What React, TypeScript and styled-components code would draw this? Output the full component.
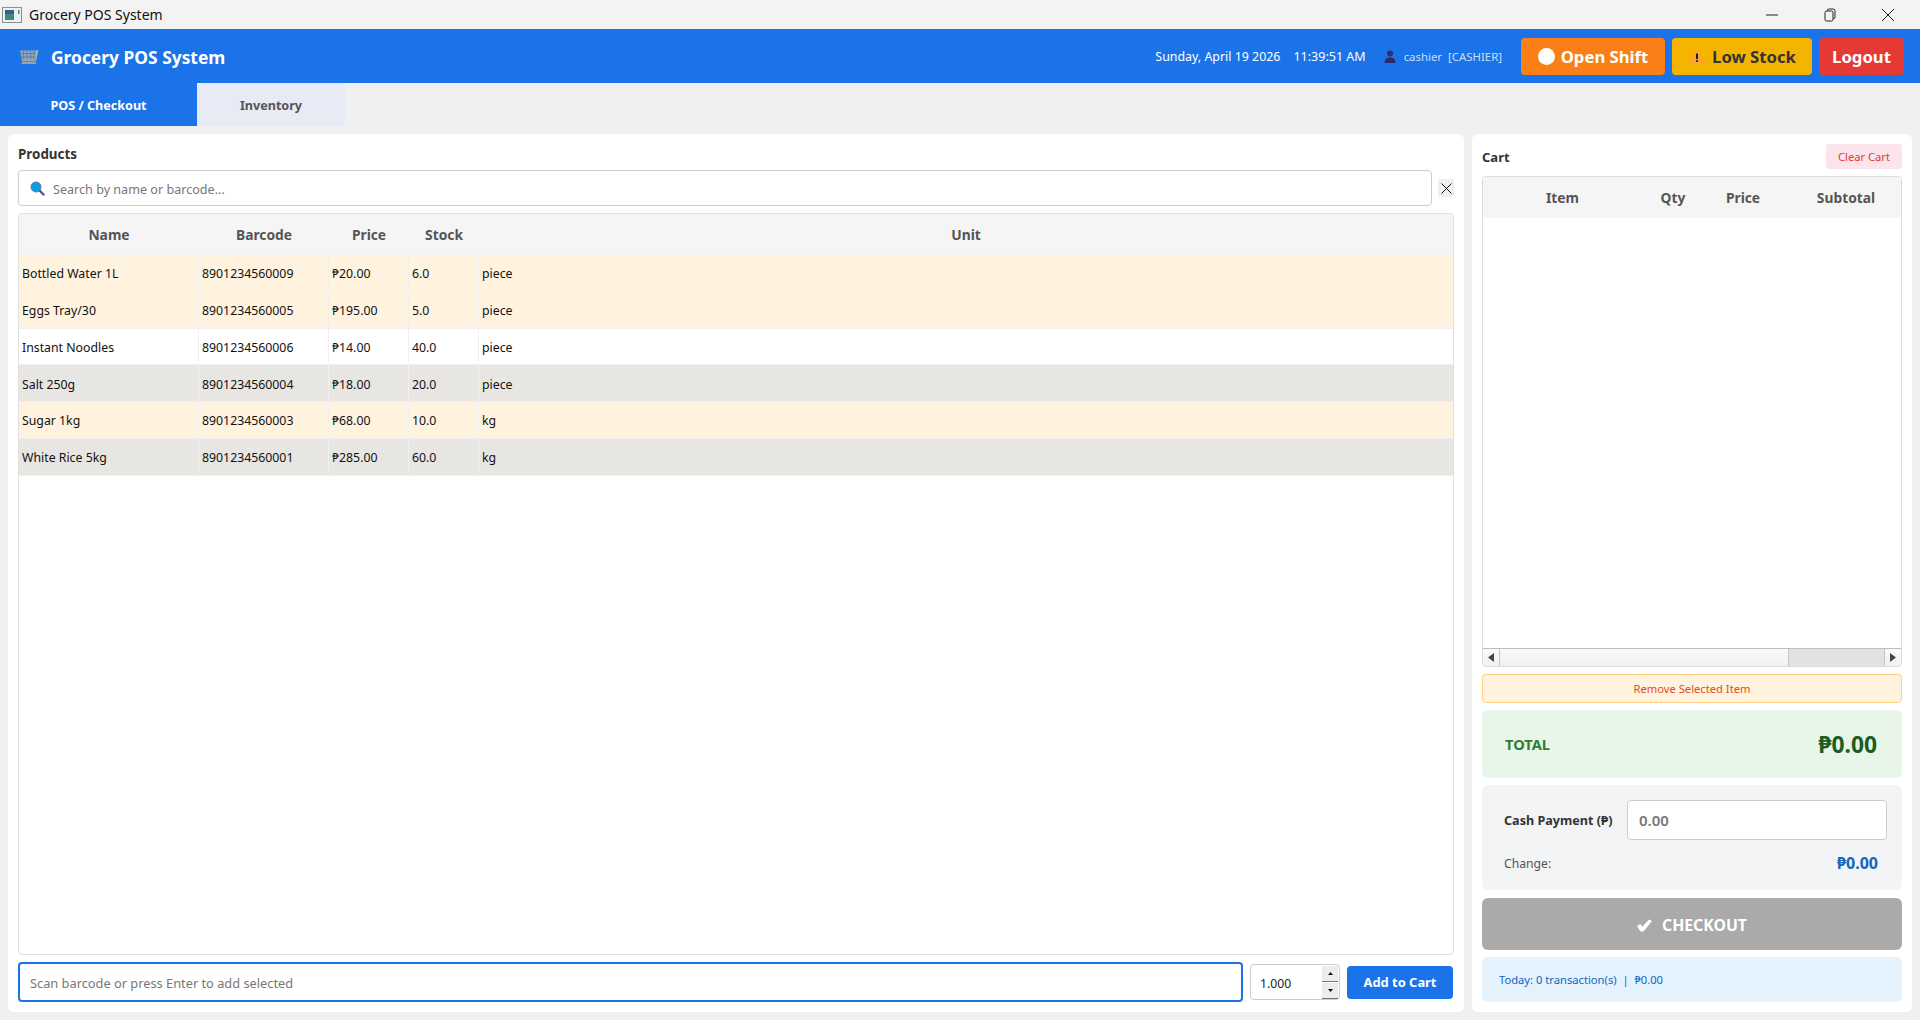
import styled, { createGlobalStyle } from "styled-components";

type Product = {
  name: string;
  barcode: string;
  price: string;
  stock: string;
  unit: string;
  tone: "low" | "plain" | "alt";
};

const products: Product[] = [
  { name: "Bottled Water 1L", barcode: "8901234560009", price: "₱20.00", stock: "6.0", unit: "piece", tone: "low" },
  { name: "Eggs Tray/30", barcode: "8901234560005", price: "₱195.00", stock: "5.0", unit: "piece", tone: "low" },
  { name: "Instant Noodles", barcode: "8901234560006", price: "₱14.00", stock: "40.0", unit: "piece", tone: "plain" },
  { name: "Salt 250g", barcode: "8901234560004", price: "₱18.00", stock: "20.0", unit: "piece", tone: "alt" },
  { name: "Sugar 1kg", barcode: "8901234560003", price: "₱68.00", stock: "10.0", unit: "kg", tone: "low" },
  { name: "White Rice 5kg", barcode: "8901234560001", price: "₱285.00", stock: "60.0", unit: "kg", tone: "alt" },
];

const rowColors = { low: "#fff3e0", plain: "#ffffff", alt: "#e8e6e3" };

const App = (): JSX.Element => {
  return (
    <Page>
      <GlobalStyle />
      <TitleBar>
        <TitleLeft>
          <WindowIcon />
          <span>Grocery POS System</span>
        </TitleLeft>
        <WindowControls>
          <WindowButton>
            <svg width="12" height="12" viewBox="0 0 12 12">
              <path d="M0 6h12" stroke="#222" strokeWidth="1" />
            </svg>
          </WindowButton>
          <WindowButton>
            <svg width="12" height="14" viewBox="0 0 12 14">
              <rect x="1" y="3" width="8" height="10" rx="1.5" fill="none" stroke="#222" />
              <path d="M3.5 3V2.2A1.2 1.2 0 0 1 4.7 1h4.6A1.7 1.7 0 0 1 11 2.7v6.6A1.2 1.2 0 0 1 9.8 10.5H9" fill="none" stroke="#222" />
            </svg>
          </WindowButton>
          <WindowButton>
            <svg width="14" height="14" viewBox="0 0 14 14">
              <path d="M1 1l12 12M13 1L1 13" stroke="#222" strokeWidth="1" />
            </svg>
          </WindowButton>
        </WindowControls>
      </TitleBar>

      <Header>
        <Brand>
          <CartLogo />
          <span>Grocery POS System</span>
        </Brand>
        <HeaderRight>
          <DateText>Sunday, April 19 2026</DateText>
          <TimeText>11:39:51 AM</TimeText>
          <UserInfo>
            <UserIcon />
            <span>cashier</span>
            <span>[CASHIER]</span>
          </UserInfo>
          <HeaderButtons>
            <HeaderButton $bg="#f97f16" $width={144}>
              <Dot />
              Open Shift
            </HeaderButton>
            <HeaderButton $bg="#f5b400" $color="#333" $width={140}>
              <WarnIcon />
              Low Stock
            </HeaderButton>
            <HeaderButton $bg="#e53935" $width={85}>
              Logout
            </HeaderButton>
          </HeaderButtons>
        </HeaderRight>
      </Header>

      <Tabs>
        <Tab $active $width={197}>POS / Checkout</Tab>
        <Tab $width={148}>Inventory</Tab>
      </Tabs>

      <Main>
        <ProductsPanel>
          <PanelTitle>Products</PanelTitle>
          <SearchRow>
            <SearchBox>
              <SearchIcon />
              <SearchInput placeholder="Search by name or barcode..." />
            </SearchBox>
            <ClearSearch>
              <svg width="11" height="11" viewBox="0 0 11 11">
                <path d="M.5.5l10 10M10.5.5l-10 10" stroke="#111" strokeWidth="1" />
              </svg>
            </ClearSearch>
          </SearchRow>
          <ProductTable>
            <ProductHead>
              <span>Name</span>
              <span>Barcode</span>
              <span>Price</span>
              <span>Stock</span>
              <span>Unit</span>
            </ProductHead>
            {products.map((product) => (
              <ProductRow key={product.barcode} $tone={product.tone}>
                <ProductCell>{product.name}</ProductCell>
                <ProductCell>{product.barcode}</ProductCell>
                <ProductCell>{product.price}</ProductCell>
                <ProductCell>{product.stock}</ProductCell>
                <ProductCell>{product.unit}</ProductCell>
              </ProductRow>
            ))}
          </ProductTable>
          <ScanRow>
            <ScanInput placeholder="Scan barcode or press Enter to add selected" />
            <QtyBox>
              <QtyValue defaultValue="1.000" />
              <SpinColumn>
                <SpinButton>
                  <svg width="5" height="3" viewBox="0 0 5 3"><path d="M2.5 0L5 3H0z" fill="#111" /></svg>
                </SpinButton>
                <SpinButton>
                  <svg width="5" height="3" viewBox="0 0 5 3"><path d="M0 0h5L2.5 3z" fill="#111" /></svg>
                </SpinButton>
              </SpinColumn>
            </QtyBox>
            <AddButton>Add to Cart</AddButton>
          </ScanRow>
        </ProductsPanel>

        <CartPanel>
          <CartHeader>
            <CartTitle>Cart</CartTitle>
            <ClearCart>Clear Cart</ClearCart>
          </CartHeader>
          <CartTable>
            <CartHead>
              <span>Item</span>
              <span>Qty</span>
              <span>Price</span>
              <span>Subtotal</span>
            </CartHead>
            <CartBody />
            <ScrollBar>
              <ScrollArrow>
                <svg width="6" height="9" viewBox="0 0 6 9"><path d="M6 0v9L0 4.5z" fill="#444" /></svg>
              </ScrollArrow>
              <ScrollTrack />
              <ScrollThumb />
              <ScrollArrow>
                <svg width="6" height="9" viewBox="0 0 6 9"><path d="M0 0v9l6-4.500z" fill="#444" /></svg>
              </ScrollArrow>
            </ScrollBar>
          </CartTable>
          <RemoveButton>Remove Selected Item</RemoveButton>
          <TotalBox>
            <TotalLabel>TOTAL</TotalLabel>
            <TotalValue>₱0.00</TotalValue>
          </TotalBox>
          <PaymentBox>
            <CashRow>
              <CashLabel>Cash Payment (₱)</CashLabel>
              <CashInput placeholder="0.00" />
            </CashRow>
            <ChangeRow>
              <ChangeLabel>Change:</ChangeLabel>
              <ChangeValue>₱0.00</ChangeValue>
            </ChangeRow>
          </PaymentBox>
          <CheckoutButton>
            <svg width="15" height="13" viewBox="0 0 15 13">
              <path d="M0 7l3.500-2 1.800 2.800L12 0.500 15 2 6.500 12.500H3.500z" fill="#ffffff" />
            </svg>
            CHECKOUT
          </CheckoutButton>
          <TodayBox>Today: 0 transaction(s)&nbsp; |&nbsp; ₱0.00</TodayBox>
        </CartPanel>
      </Main>
    </Page>
  );
};

export default App;

const WindowIcon = () => (
  <svg width="20" height="16" viewBox="0 0 20 16">
    <rect x="0.5" y="0.5" width="19" height="15" fill="#eef1f1" stroke="#8a8f92" />
    <rect x="3" y="3" width="9" height="10" fill="#3f8a7c" />
    <rect x="3" y="3" width="9" height="4" fill="#35607f" />
    <rect x="16" y="3" width="1.5" height="4" fill="#4a8a78" />
  </svg>
);

const CartLogo = () => (
  <svg width="20" height="16" viewBox="0 0 20 16">
    <path d="M1 1.500h15.500l3-1L17 12H3z" fill="#9aa3ad" />
    <path d="M4.500 2v8M8 2v8M11.500 2v8M15 2v8M1.500 4.500h15M2 8h14.500" stroke="#4f7fc0" strokeWidth="0.9" />
    <path d="M2.500 12.500h14l1 2.500H3z" fill="#8fa8a8" />
    <path d="M17.500 4l1.500-3-2 11z" fill="#b9c4c4" />
  </svg>
);

const UserIcon = () => (
  <svg width="12" height="13" viewBox="0 0 12 13">
    <circle cx="6" cy="3.500" r="3" fill="#3b2a6b" />
    <path d="M0.500 13c0-3.500 2-5.500 5.500-5.500s5.500 2 5.500 5.500z" fill="#2e2a66" />
  </svg>
);

const WarnIcon = () => (
  <svg width="18" height="16" viewBox="0 0 18 16">
    <path d="M9 1l8 14H1z" fill="#ffa52e" />
    <path d="M9 5.500v5.500" stroke="#111" strokeWidth="1.800" />
    <circle cx="9" cy="13" r="1" fill="#111" />
  </svg>
);

const SearchIcon = () => (
  <svg width="15" height="15" viewBox="0 0 15 15">
    <path d="M9.500 9.500l4 4" stroke="#5b4a96" strokeWidth="2.400" strokeLinecap="round" />
    <circle cx="6" cy="6" r="5" fill="#0a9fdc" stroke="#4c7fa8" strokeWidth="1" />
  </svg>
);

const GlobalStyle = createGlobalStyle`
  html, body {
    margin: 0;
    padding: 0;
    background: #f0f0f0;
  }

  * {
    box-sizing: border-box;
  }

  body, input, button {
    font-family: "Noto Sans", "Open Sans", "DejaVu Sans", sans-serif;
  }
`;

const Page = styled.div`
  display: flex;
  flex-direction: column;
  width: 1920px;
  height: 1020px;
  background: #f0f0f0;
  overflow: hidden;
`;

const TitleBar = styled.div`
  display: flex;
  align-items: center;
  justify-content: space-between;
  height: 29px;
  padding-left: 2px;
  background: #f3f3f3;
  color: #111;
  font-size: 14px;
`;

const TitleLeft = styled.div`
  display: flex;
  align-items: center;
  gap: 7px;
`;

const WindowControls = styled.div`
  display: flex;
  padding-right: 3px;
`;

const WindowButton = styled.div`
  display: flex;
  align-items: center;
  justify-content: center;
  width: 58px;
  height: 29px;
`;

const Header = styled.header`
  display: flex;
  align-items: center;
  justify-content: space-between;
  height: 54px;
  padding: 0 16px 0 19px;
  background: #1a73e8;
`;

const Brand = styled.div`
  display: flex;
  align-items: center;
  gap: 12px;
  padding-top: 1px;
  color: #ffffff;
  font-size: 17.4px;
  font-weight: 700;
`;

const HeaderRight = styled.div`
  display: flex;
  align-items: center;
`;

const DateText = styled.span`
  margin-right: 13px;
  padding-top: 1px;
  color: #ffffff;
  font-size: 12.4px;
`;

const TimeText = styled.span`
  margin-right: 18px;
  padding-top: 1px;
  color: #ffffff;
  font-size: 12.5px;
`;

const UserInfo = styled.div`
  display: flex;
  align-items: center;
  gap: 6px;
  margin-right: 19px;
  color: #c9defa;
  font-size: 11.4px;

  svg {
    margin-right: 2px;
  }
`;

const HeaderButtons = styled.div`
  display: flex;
  gap: 7px;
`;

const HeaderButton = styled.button<{ $bg: string; $color?: string; $width: number }>`
  display: flex;
  align-items: center;
  justify-content: center;
  gap: 6px;
  width: ${(props) => props.$width}px;
  height: 37px;
  padding: 0;
  border: none;
  border-radius: 4px;
  background: ${(props) => props.$bg};
  color: ${(props) => props.$color || "#ffffff"};
  font-size: 16.7px;
  font-weight: 700;
`;

const Dot = styled.span`
  width: 17px;
  height: 17px;
  border-radius: 50%;
  background: #ffffff;
`;

const Tabs = styled.nav`
  display: flex;
  height: 43px;
`;

const Tab = styled.div<{ $active?: boolean; $width: number }>`
  display: flex;
  align-items: center;
  justify-content: center;
  width: ${(props) => props.$width}px;
  padding-top: 2px;
  background: ${(props) => (props.$active ? "#1a73e8" : "#e8eaf6")};
  color: ${(props) => (props.$active ? "#ffffff" : "#555555")};
  font-size: 12.6px;
  font-weight: 700;
`;

const Main = styled.main`
  display: flex;
  flex: 1;
  gap: 8px;
  padding: 8px 8px 8px;
  min-height: 0;
`;

const Panel = styled.section`
  display: flex;
  flex-direction: column;
  border-radius: 6px;
  background: #ffffff;
`;

const ProductsPanel = styled(Panel)`
  width: 1456px;
  padding: 11px 10px 10px;
`;

const PanelTitle = styled.div`
  height: 25px;
  color: #333;
  font-size: 13.4px;
  font-weight: 700;
  line-height: 19px;
`;

const SearchRow = styled.div`
  display: flex;
  align-items: center;
  gap: 6px;
  height: 36px;
`;

const SearchBox = styled.div`
  display: flex;
  align-items: center;
  gap: 8px;
  flex: 1;
  height: 36px;
  padding: 0 10px 0 11px;
  border: 1px solid #ccc;
  border-radius: 4px;
`;

const SearchInput = styled.input`
  flex: 1;
  padding: 2px 0 0;
  border: none;
  outline: none;
  font-size: 12.6px;
  color: #333;

  &::placeholder {
    color: #777;
  }
`;

const ClearSearch = styled.button`
  display: flex;
  align-items: center;
  justify-content: center;
  width: 16px;
  height: 18px;
  padding: 0;
  border: none;
  border-radius: 2px;
  background: #f0f0f0;
`;

const ProductTable = styled.div`
  flex: 1;
  margin-top: 7px;
  border: 1px solid #e0e0e0;
  border-radius: 4px;
  overflow: hidden;
`;

const productColumns = "180px 130px 80px 70px 1fr";

const ProductHead = styled.div`
  display: grid;
  grid-template-columns: ${productColumns};
  align-items: center;
  height: 41px;
  background: #f5f5f5;
  color: #555;
  font-size: 13.8px;
  font-weight: 700;
  text-align: center;
`;

const ProductRow = styled.div<{ $tone: Product["tone"] }>`
  display: grid;
  grid-template-columns: ${productColumns};
  height: 36.8px;
  border-bottom: 1px solid #f0f0f0;
  background: ${(props) => rowColors[props.$tone]};
  color: #111;
  font-size: 12.3px;
`;

const ProductCell = styled.div`
  display: flex;
  align-items: center;
  padding: 1.5px 0 0 3px;
  border-right: 1px solid #f0f0f0;

  &:last-child {
    border-right: none;
  }
`;

const ScanRow = styled.div`
  display: flex;
  align-items: center;
  gap: 7px;
  height: 40px;
  margin-top: 7px;
`;

const ScanInput = styled.input`
  width: 1225px;
  height: 40px;
  padding: 2px 10px 0;
  border: 2px solid #1a73e8;
  border-radius: 4px;
  outline: none;
  font-size: 12.8px;

  &::placeholder {
    color: #777;
  }
`;

const QtyBox = styled.div`
  display: flex;
  align-items: center;
  width: 90px;
  height: 36px;
  padding: 0 1px 0 9px;
  border: 1px solid #ccc;
  border-radius: 4px;
`;

const QtyValue = styled.input`
  flex: 1;
  width: 60px;
  border: none;
  outline: none;
  padding: 2px 0 0;
  color: #222;
  font-size: 12.2px;
`;

const SpinColumn = styled.div`
  display: flex;
  flex-direction: column;
  gap: 1px;
`;

const SpinButton = styled.div`
  display: flex;
  align-items: center;
  justify-content: center;
  width: 16px;
  height: 16px;
  border-bottom: 1px solid #777;
  background: #ececec;
`;

const AddButton = styled.button`
  width: 106px;
  height: 33px;
  border: none;
  border-radius: 4px;
  background: #1a73e8;
  color: #ffffff;
  font-size: 12.9px;
  font-weight: 700;
`;

const CartPanel = styled(Panel)`
  width: 440px;
  padding: 10px;
`;

const CartHeader = styled.div`
  display: flex;
  align-items: center;
  justify-content: space-between;
  height: 24px;
`;

const CartTitle = styled.div`
  padding-top: 2px;
  color: #333;
  font-size: 13px;
  font-weight: 700;
`;

const ClearCart = styled.button`
  width: 76px;
  height: 25px;
  padding: 0;
  border: none;
  border-radius: 3px;
  background: #fce4ec;
  color: #e53935;
  font-size: 11.2px;
`;

const CartTable = styled.div`
  display: flex;
  flex-direction: column;
  height: 491px;
  margin-top: 8px;
  border: 1px solid #dcdcdc;
  border-radius: 4px;
  overflow: hidden;
`;

const CartHead = styled.div`
  display: grid;
  grid-template-columns: 159px 62px 78px 1fr;
  align-items: center;
  height: 41px;
  background: #f5f5f5;
  color: #555;
  font-size: 13.8px;
  font-weight: 700;
  text-align: center;

  span:last-child {
    padding-left: 9px;
  }
`;

const CartBody = styled.div`
  flex: 1;
  background: #ffffff;
`;

const ScrollBar = styled.div`
  display: flex;
  height: 18px;
  border-top: 1px solid #bdbdbd;
  background: linear-gradient(#fafafa, #f0f0f0);
`;

const ScrollArrow = styled.div`
  display: flex;
  align-items: center;
  justify-content: center;
  width: 17px;
  border-right: 1px solid #c4c4c4;

  &:last-child {
    border-right: none;
    border-left: 1px solid #c4c4c4;
  }
`;

const ScrollTrack = styled.div`
  flex: 1;
`;

const ScrollThumb = styled.div`
  width: 96px;
  background: #e2e2e2;
  border-left: 1px solid #c4c4c4;
`;

const RemoveButton = styled.button`
  height: 29px;
  margin-top: 7px;
  border: 1px solid #ffcc80;
  border-radius: 4px;
  background: #fff3e0;
  color: #e64a19;
  font-size: 11.2px;
`;

const TotalBox = styled.div`
  display: flex;
  align-items: center;
  justify-content: space-between;
  height: 68px;
  margin-top: 7px;
  padding: 0 25px 0 23px;
  border-radius: 6px;
  background: #e8f5e9;
`;

const TotalLabel = styled.span`
  color: #2e7d32;
  font-size: 14.6px;
  font-weight: 700;
`;

const TotalValue = styled.span`
  color: #1b5e20;
  font-size: 22.8px;
  font-weight: 700;
`;

const PaymentBox = styled.div`
  display: flex;
  flex-direction: column;
  height: 105px;
  margin-top: 7px;
  padding: 15px 15px 0 22px;
  border-radius: 6px;
  background: #f3f4f6;
`;

const CashRow = styled.div`
  display: flex;
  align-items: center;
  gap: 15px;
`;

const CashLabel = styled.span`
  width: 108px;
  color: #333;
  font-size: 12.6px;
  font-weight: 700;
  white-space: nowrap;
`;

const CashInput = styled.input`
  width: 260px;
  height: 40px;
  padding: 0 10px 0 11px;
  border: 1px solid #ccc;
  border-radius: 4px;
  outline: none;
  font-size: 15px;
  font-weight: 600;

  &::placeholder {
    color: #777;
  }
`;

const ChangeRow = styled.div`
  display: flex;
  align-items: center;
  justify-content: space-between;
  margin-top: 12px;
  padding-right: 9px;
`;

const ChangeLabel = styled.span`
  color: #555;
  font-size: 12.2px;
`;

const ChangeValue = styled.span`
  color: #1565c0;
  font-size: 16px;
  font-weight: 700;
`;

const CheckoutButton = styled.button`
  display: flex;
  align-items: center;
  justify-content: center;
  gap: 10px;
  height: 52px;
  margin-top: 8px;
  padding: 2px 0 0;
  border: none;
  border-radius: 6px;
  background: #aaaaaa;
  color: #ffffff;
  font-size: 15.8px;
  font-weight: 700;
`;

const TodayBox = styled.div`
  display: flex;
  align-items: center;
  height: 45px;
  margin-top: 7px;
  padding: 0 17px;
  border-radius: 6px;
  background: #e3f2fd;
  color: #1565c0;
  font-size: 11.2px;
`;
